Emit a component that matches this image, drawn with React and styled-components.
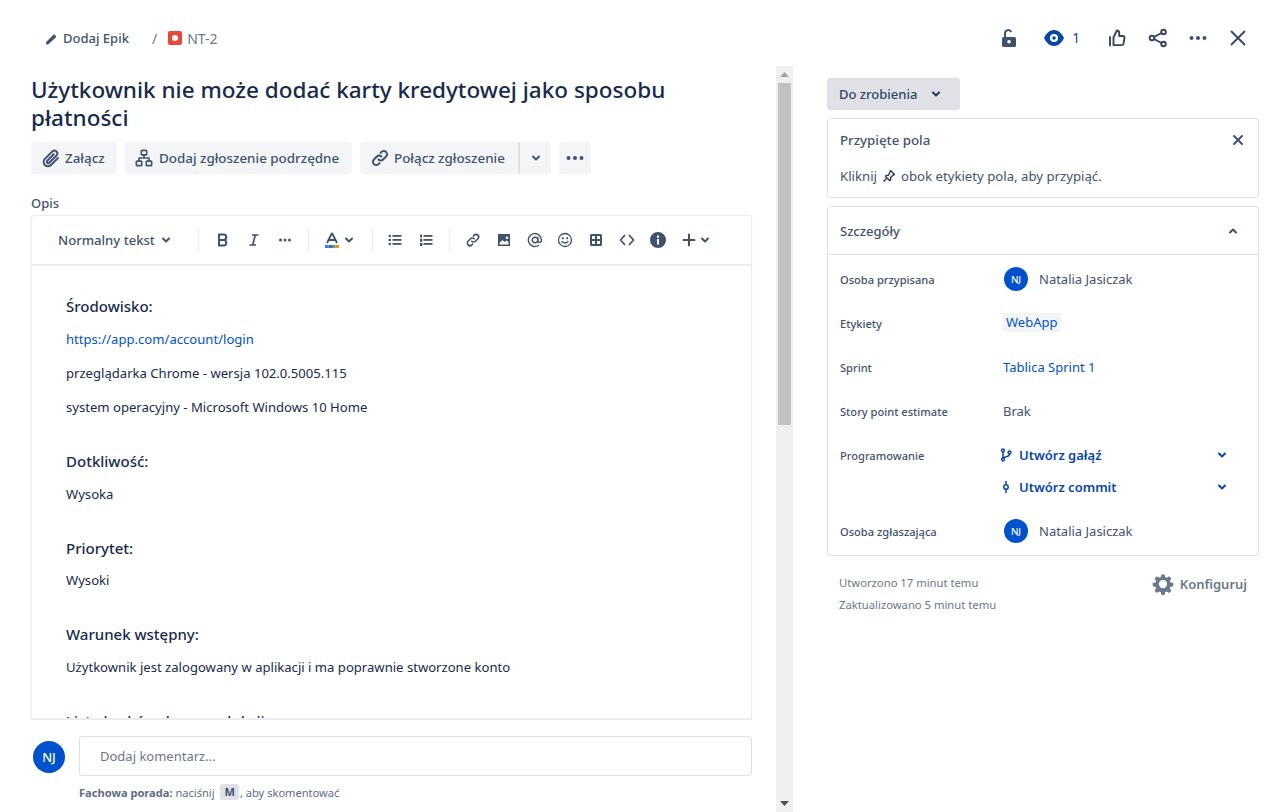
import React from "react";
import styled, { createGlobalStyle } from "styled-components";

const FONT = `"Noto Sans", "Open Sans", sans-serif`;

const Global = createGlobalStyle`
  html, body { margin: 0; padding: 0; height: 100%; background: #fff; overflow: hidden; }
  body { font-family: ${FONT}; color: #172b4d; }
  * { box-sizing: border-box; }
`;

const Page = styled.div`
  width: 1277px;
  height: 812px;
  display: flex;
  flex-direction: column;
  overflow: hidden;
`;

const TopBar = styled.header`
  height: 66px;
  flex: none;
  display: flex;
  align-items: flex-start;
  justify-content: space-between;
  padding: 28px 29px 0 45px;
`;
const Crumbs = styled.nav`
  display: flex;
  align-items: center;
  height: 20px;
  font-size: 14px;
  color: #6b778c;
`;
const EpicLink = styled.span`
  display: flex;
  align-items: center;
  gap: 5px;
  color: #42526e;
  font-weight: 500;
  font-size: 13px;
`;
const Slash = styled.span`
  margin: 0 11px 0 23px;
  color: #6b778c;
`;
const IssueKey = styled.span`
  display: flex;
  align-items: center;
  gap: 5px;
`;
const TopActions = styled.div`
  display: flex;
  align-items: center;
  height: 20px;
`;
const TopAction = styled.span`
  display: flex;
  align-items: center;
  justify-content: center;
  gap: 8px;
  margin-left: ${p => p.$gap}px;
  color: #344563;
  font-size: 13.5px;
`;
const WatchCount = styled.span`
  color: #0747a6;
`;

const Main = styled.main`
  flex: 1;
  min-height: 0;
  display: flex;
`;
const LeftPane = styled.section`
  width: 793px;
  flex: none;
  display: flex;
  min-height: 0;
`;
const LeftColumn = styled.div`
  width: 776px;
  flex: none;
  display: flex;
  flex-direction: column;
  padding: 10px 24px 0 31px;
  min-height: 0;
`;
const Title = styled.h1`
  margin: 0;
  font-size: 22.5px;
  line-height: 28px;
  font-weight: 500;
  color: #172b4d;
  width: 690px;
  height: 56px;
`;
const ButtonRow = styled.div`
  display: flex;
  margin-top: 10px;
  gap: 8px;
  height: 32px;
  flex: none;
`;
const ActionButton = styled.button`
  display: flex;
  align-items: center;
  gap: ${p => p.$gap ?? 4}px;
  height: 32px;
  width: ${p => p.$w}px;
  padding: 0 ${p => p.$pad ?? 12}px;
  justify-content: ${p => p.$center ? "center" : "flex-start"};
  border: 0;
  border-radius: 3px;
  background: #f4f5f7;
  color: #42526e;
  font: 500 13.4px ${FONT};
  white-space: nowrap;
`;
const SplitGroup = styled.div`
  display: flex;
`;
const SplitEdge = styled(ActionButton)`
  border-left: 2px solid #dfe1e6;
  border-radius: 0 3px 3px 0;
`;
const Label = styled.div`
  margin-top: 21px;
  height: 20px;
  font-size: 13px;
  line-height: 16px;
  font-weight: 500;
  color: #42526e;
  flex: none;
`;
const Editor = styled.div`
  height: 505px;
  flex: none;
  border: 1px solid #ebecf0;
  border-bottom-width: 2px;
  border-radius: 3px 3px 0 0;
  overflow: hidden;
  display: flex;
  flex-direction: column;
  box-shadow: 0 0 1px rgba(9,30,66,.12);
`;
const Toolbar = styled.div`
  height: 50px;
  flex: none;
  display: flex;
  align-items: center;
  border-bottom: 2px solid #ebecf0;
  padding-left: 26px;
  color: #42526e;
`;
const StyleSelect = styled.span`
  display: flex;
  align-items: center;
  gap: 3px;
  width: 140px;
  font-size: 13.1px;
  font-weight: 500;
  color: #42526e;
`;
const Divider = styled.span`
  width: 1px;
  height: 24px;
  background: #ebecf0;
  flex: none;
`;
const ToolGroup = styled.span`
  display: flex;
  align-items: center;
  flex: none;
  padding: 0 ${p => p.$r ?? 0}px 0 ${p => p.$l ?? 0}px;
`;
const ToolSlot = styled.span`
  display: flex;
  align-items: center;
  justify-content: center;
  width: ${p => p.$w ?? 31}px;
  flex: none;
  color: #42526e;
`;
const EditorBody = styled.div`
  flex: 1;
  min-height: 0;
  overflow: hidden;
  padding: 30px 34px 0;
`;
const Heading = styled.h3`
  margin: ${p => p.$first ? 0 : 34}px 0 0;
  font-size: 15px;
  line-height: 20px;
  font-weight: 500;
  color: #172b4d;
`;
const Para = styled.p`
  margin: ${p => p.$mt ?? 14}px 0 0;
  font-size: 13.1px;
  line-height: 20px;
  color: #172b4d;
`;
const DocLink = styled.span`
  color: #0052cc;
`;
const CommentRow = styled.div`
  display: flex;
  align-items: flex-start;
  gap: 14px;
  margin-top: 21px;
  padding-left: 2px;
  flex: none;
`;
const Avatar = styled.span`
  width: ${p => p.$size}px;
  height: ${p => p.$size}px;
  margin-left: ${p => p.$indent ?? 0}px;
  border-radius: 50%;
  background: #0052cc;
  color: #fff;
  font-size: ${p => p.$size * 0.4}px;
  font-weight: 500;
  display: flex;
  align-items: center;
  justify-content: center;
  flex: none;
`;
const CommentColumn = styled.div`
  flex: 1;
  margin-top: -5px;
`;
const CommentInput = styled.div`
  height: 40px;
  border: 1px solid #dfe1e6;
  border-radius: 3px;
  display: flex;
  align-items: center;
  padding-left: 20px;
  font-size: 13px;
  color: #6b778c;
`;
const ProTip = styled.div`
  margin-top: 8px;
  height: 16px;
  display: flex;
  align-items: center;
  font-size: 11.1px;
  color: #5e6c84;
  white-space: pre;
`;
const ProStrong = styled.strong`
  font-weight: 700;
`;
const Key = styled.span`
  background: #dfe1e6;
  border-radius: 3px;
  padding: 0 4px;
  margin: 0 1px 0 3px;
  color: #42526e;
  font-weight: 700;
  line-height: 16px;
  font-size: 11.1px;
`;
const Scrollbar = styled.div`
  width: 17px;
  flex: none;
  background: #f0f0f0;
  display: flex;
  flex-direction: column;
  align-items: center;
  justify-content: space-between;
`;
const ScrollArrow = styled.span`
  height: 17px;
  flex: none;
  display: flex;
  align-items: center;
  justify-content: center;
`;
const ScrollTrack = styled.div`
  flex: 1;
  width: 100%;
  display: flex;
  justify-content: center;
`;
const ScrollThumb = styled.div`
  width: 13px;
  height: 342px;
  background: #c1c1c1;
`;

const RightPane = styled.aside`
  width: 432px;
  margin-left: 34px;
  flex: none;
  padding-top: 12px;
  display: flex;
  flex-direction: column;
`;
const StatusButton = styled.button`
  width: 133px;
  height: 32px;
  border: 0;
  border-radius: 3px;
  background: #dfe1e6;
  color: #344563;
  font: 500 13px ${FONT};
  display: flex;
  align-items: center;
  gap: 11px;
  padding: 0 12px;
`;
const Panel = styled.section`
  border: 1px solid #dfe1e6;
  border-radius: 3px;
  margin-top: ${p => p.$mt}px;
`;
const PinnedHead = styled.div`
  display: flex;
  justify-content: space-between;
  align-items: center;
  height: 20px;
  margin: 11px 13px 0 12px;
  font-size: 13.3px;
  font-weight: 500;
  color: #42526e;
`;
const PinnedHint = styled.div`
  display: flex;
  align-items: center;
  gap: 5px;
  margin: 16px 12px 11px;
  height: 20px;
  font-size: 13.2px;
  color: #42526e;
`;
const DetailsHead = styled.div`
  height: 48px;
  display: flex;
  align-items: center;
  justify-content: space-between;
  padding: 0 17px 0 12px;
  border-bottom: 1px solid #dfe1e6;
  font-size: 13px;
  font-weight: 500;
  color: #42526e;
`;
const Fields = styled.div`
  padding: 2px 0 2px;
`;
const FieldRow = styled.div`
  display: grid;
  grid-template-columns: 163px 1fr;
  height: 44px;
  padding-left: 12px;
  align-items: center;
`;
const FieldLabel = styled.span`
  font-size: 11.1px;
  font-weight: 500;
  color: #42526e;
`;
const FieldValue = styled.span`
  display: flex;
  align-items: center;
  gap: 11px;
  font-size: 13px;
  color: #42526e;
`;
const Tag = styled.span`
  background: #f4f5f7;
  color: #0052cc;
  border-radius: 3px;
  padding: 0 4px;
  margin: -2px 0 0 -1px;
  line-height: 19px;
`;
const BlueText = styled.span`
  color: #0052cc;
`;
const DevBlock = styled.div`
  display: grid;
  grid-template-columns: 159px 1fr;
  padding-left: 12px;
  height: 76px;
`;
const DevLabel = styled(FieldLabel)`
  padding-top: 15px;
`;
const DevRows = styled.div`
  display: flex;
  flex-direction: column;
  padding-top: 6px;
`;
const DevRow = styled.div`
  height: 32px;
  display: flex;
  align-items: center;
  padding-right: 28px;
  color: #0747a6;
  font-size: 13px;
  font-weight: 600;
`;
const DevName = styled.span`
  flex: 1;
  margin-left: 6px;
  color: #0747a6;
`;
const MetaRow = styled.div`
  display: flex;
  justify-content: space-between;
  align-items: flex-start;
  padding: 16px 12px 0 12px;
`;
const MetaDates = styled.div`
  font-size: 11.25px;
  line-height: 22px;
  color: #6b778c;
`;
const Configure = styled.span`
  display: flex;
  align-items: center;
  gap: 6px;
  height: 24px;
  font-size: 13px;
  font-weight: 600;
  color: #6b778c;
`;

const Chevron = ({ up, size = 16, color = "currentColor", w = 2 }) => (
  <svg width={size} height={size} viewBox="0 0 16 16" fill="none" stroke={color} strokeWidth={w} strokeLinecap="round" strokeLinejoin="round" style={{ flex: "none" }}>
    <path d={up ? "M5 9.5 8 6.5l3 3" : "M5 6.5 8 9.5l3-3"} />
  </svg>
);
const Ic = ({ s = 20, children, fill = "none", sw = 2, vb = 20 }) => (
  <svg width={s} height={s} viewBox={`0 0 ${vb} ${vb}`} fill={fill} stroke={fill === "none" ? "currentColor" : "none"} strokeWidth={sw} strokeLinecap="round" strokeLinejoin="round" style={{ flex: "none" }}>
    {children}
  </svg>
);
const LinkGlyph = ({ s = 20, sw = 2 }) => (
  <Ic s={s} sw={sw}>
    <path d="M8.5 11.5a3.2 3.2 0 0 0 4.6 0l3-3a3.2 3.2 0 0 0-4.6-4.6l-1 1" />
    <path d="M11.5 8.5a3.2 3.2 0 0 0-4.6 0l-3 3a3.2 3.2 0 0 0 4.6 4.6l1-1" />
  </Ic>
);

const Field = ({ label, children }) => (
  <FieldRow>
    <FieldLabel>{label}</FieldLabel>
    <FieldValue>{children}</FieldValue>
  </FieldRow>
);

export default function App() {
  return (
    <Page>
      <Global />
      <TopBar>
        <Crumbs>
          <EpicLink>
            <svg width="13" height="13" viewBox="0 0 13 13" fill="#42526e"><path d="M1 10.2 8.4 2.8a1 1 0 0 1 1.4 0l1.1 1.1a1 1 0 0 1 0 1.4L3.5 12.2 1 12.5z" /></svg>
            Dodaj Epik
          </EpicLink>
          <Slash>/</Slash>
          <IssueKey>
            <svg width="14" height="14" viewBox="0 0 14 14"><rect width="14" height="14" rx="2" fill="#e5493a" /><circle cx="7" cy="7" r="3" fill="#fff" /></svg>
            NT-2
          </IssueKey>
        </Crumbs>
        <TopActions>
          <TopAction>
            <svg width="16" height="20" viewBox="0 0 16 20" fill="#42526e"><path d="M3 9V5.2a4.2 4.2 0 0 1 8.1-1.5l-1.9.7A2.2 2.2 0 0 0 5 5.2V9h8.500A1.500 1.500 0 0 1 15 10.500v7a1.500 1.500 0 0 1-1.500 1.500h-11A1.500 1.500 0 0 1 1 17.500v-7A1.500 1.500 0 0 1 2.500 9zm5 3a1.800 1.800 0 1 0 0 3.600A1.800 1.800 0 0 0 8 12z" fillRule="evenodd" /></svg>
          </TopAction>
          <TopAction $gap={27}>
            <svg width="20" height="18" viewBox="0 0 20 18" fill="#0747a6"><path fillRule="evenodd" d="M10 1c5 0 8.500 4.500 10 8-1.500 3.500-5 8-10 8S1.500 12.500 0 9c1.500-3.500 5-8 10-8zm0 4a4 4 0 1 0 0 8 4 4 0 0 0 0-8zm0 2.200a1.800 1.800 0 1 1 0 3.600 1.800 1.800 0 0 1 0-3.600z" /></svg>
            <WatchCount>1</WatchCount>
          </TopAction>
          <TopAction $gap={27}>
            <Ic s={20} sw={1.9}>
              <path d="M3 9v8.500M6.500 9.500 9.800 2.500c1.500 0 2.400 1 2.400 2.500v3h3.800c1 0 1.700.9 1.500 1.900l-1 5.700c-.2.900-.9 1.500-1.800 1.500H6.500z" />
            </Ic>
          </TopAction>
          <TopAction $gap={21}>
            <Ic s={20} sw={1.9}>
              <circle cx="4" cy="10" r="2.3" />
              <circle cx="15.5" cy="4" r="2.3" />
              <circle cx="15.5" cy="16" r="2.3" />
              <path d="M6 9 13.500 5M6 11l7.500 4" />
            </Ic>
          </TopAction>
          <TopAction $gap={20}>
            <svg width="20" height="20" viewBox="0 0 20 20" fill="#42526e"><circle cx="3.500" cy="10" r="2" /><circle cx="10" cy="10" r="2" /><circle cx="16.500" cy="10" r="2" /></svg>
          </TopAction>
          <TopAction $gap={20}>
            <Ic s={20} sw={1.8}><path d="M3.500 3.500l13 13M16.500 3.500l-13 13" /></Ic>
          </TopAction>
        </TopActions>
      </TopBar>
      <Main>
        <LeftPane>
          <LeftColumn>
            <Title>Użytkownik nie może dodać karty kredytowej jako sposobu płatności</Title>
            <ButtonRow>
              <ActionButton $w={86} $pad={10}>
                <Ic s={20} sw={2}><path d="M17 10l-7 7a4.300 4.300 0 0 1-6.100-6.100l7.500-7.500a2.900 2.900 0 0 1 4.100 4.100l-7.300 7.300a1.400 1.400 0 0 1-2-2l6.500-6.500" /></Ic>
                Załącz
              </ActionButton>
              <ActionButton $w={227} $pad={10} $gap={6}>
                <Ic s={18} sw={1.8}><rect x="7" y="1.500" width="6" height="5" rx=".8" /><rect x="1.500" y="13.500" width="6" height="5" rx=".8" /><rect x="12.500" y="13.500" width="6" height="5" rx=".8" /><path d="M10 6.500V10M4.500 13.500V10h11v3.500" /></Ic>
                Dodaj zgłoszenie podrzędne
              </ActionButton>
              <SplitGroup>
                <ActionButton $w={158} $pad={10}>
                  <LinkGlyph s={20} />
                  Połącz zgłoszenie
                </ActionButton>
                <SplitEdge $w={33} $pad={0} $center><Chevron /></SplitEdge>
              </SplitGroup>
              <ActionButton $w={32} $pad={0} $center>
                <svg width="20" height="20" viewBox="0 0 20 20" fill="#42526e"><circle cx="3.500" cy="10" r="2" /><circle cx="10" cy="10" r="2" /><circle cx="16.500" cy="10" r="2" /></svg>
              </ActionButton>
            </ButtonRow>
            <Label>Opis</Label>
            <Editor>
              <Toolbar>
                <StyleSelect>Normalny tekst<Chevron /></StyleSelect>
                <Divider />
                <ToolGroup $l={8} $r={8}>
                  <ToolSlot>
                    <svg width="14" height="14" viewBox="0 0 14 14" fill="none" stroke="#42526e" strokeWidth="2"><path d="M3 1.500h4.500a2.700 2.700 0 0 1 0 5.500H3zM3 7h5a2.800 2.800 0 0 1 0 5.500H3z" /></svg>
                  </ToolSlot>
                  <ToolSlot>
                    <svg width="14" height="14" viewBox="0 0 14 14" fill="none" stroke="#42526e" strokeWidth="1.700"><path d="M5 2h6.500M2.500 12H9M8.300 2 5.700 12" /></svg>
                  </ToolSlot>
                  <ToolSlot>
                    <svg width="16" height="16" viewBox="0 0 16 16" fill="#42526e"><circle cx="3.500" cy="8" r="1.500" /><circle cx="8" cy="8" r="1.500" /><circle cx="12.500" cy="8" r="1.500" /></svg>
                  </ToolSlot>
                </ToolGroup>
                <Divider />
                <ToolGroup $l={15} $r={15}>
                  <ToolSlot $w={16}>
                    <svg width="16" height="18" viewBox="0 0 16 18"><path d="M8 2 3 12M8 2l5 10M5 9h6" stroke="#42526e" strokeWidth="1.800" fill="none" /><rect x="1" y="14" width="3.500" height="3" fill="#2684ff" /><rect x="4.500" y="14" width="3.500" height="3" fill="#6554c0" /><rect x="8" y="14" width="3.500" height="3" fill="#36b37e" /><rect x="11.500" y="14" width="3.500" height="3" fill="#ff8b00" /></svg>
                  </ToolSlot>
                  <ToolSlot $w={17}><Chevron /></ToolSlot>
                </ToolGroup>
                <Divider />
                <ToolGroup $l={6} $r={8}>
                  <ToolSlot>
                    <svg width="14" height="14" viewBox="0 0 14 14" fill="#42526e"><circle cx="1.800" cy="3" r="1.300" /><circle cx="1.800" cy="7" r="1.300" /><circle cx="1.800" cy="11" r="1.300" /><rect x="4.500" y="2" width="9" height="1.800" /><rect x="4.500" y="6" width="9" height="1.800" /><rect x="4.500" y="10" width="9" height="1.800" /></svg>
                  </ToolSlot>
                  <ToolSlot>
                    <svg width="14" height="14" viewBox="0 0 14 14" fill="#42526e"><rect x="1" y="1.500" width="2" height="3" /><rect x="1" y="5.800" width="2.400" height="3" /><rect x="1" y="10" width="2.400" height="3" /><rect x="4.500" y="2" width="9" height="1.800" /><rect x="4.500" y="6" width="9" height="1.800" /><rect x="4.500" y="10" width="9" height="1.800" /></svg>
                  </ToolSlot>
                </ToolGroup>
                <Divider />
                <ToolGroup $l={7}>
                  <ToolSlot><LinkGlyph s={16} sw={2} /></ToolSlot>
                  <ToolSlot>
                    <svg width="14" height="14" viewBox="0 0 14 14"><path fillRule="evenodd" fill="#42526e" d="M1 1h12v12H1zm9 2.500a1.300 1.300 0 1 0 0 2.600 1.300 1.300 0 0 0 0-2.600zM2.500 11.500h9V9L9.500 7.500l-2 1.500-2-2-3 3z" /></svg>
                  </ToolSlot>
                  <ToolSlot>
                    <svg width="16" height="16" viewBox="0 0 16 16" fill="none" stroke="#42526e" strokeWidth="1.400" strokeLinecap="round"><circle cx="8" cy="8" r="2.800" /><path d="M10.800 5.200v3.500a1.800 1.800 0 0 0 3.600 0V8a6.500 6.500 0 1 0-3 5.500" /></svg>
                  </ToolSlot>
                  <ToolSlot $w={30}>
                    <svg width="16" height="16" viewBox="0 0 16 16" fill="none" stroke="#42526e" strokeWidth="1.300" strokeLinecap="round"><circle cx="8" cy="8" r="6.500" /><path d="M5 9.500c1.500 2 4.500 2 6 0" /><path d="M5.800 6v.4M10.200 6v.4" strokeWidth="1.800" /></svg>
                  </ToolSlot>
                  <ToolSlot>
                    <svg width="14" height="14" viewBox="0 0 14 14"><path fillRule="evenodd" fill="#42526e" d="M2.500 1h9A1.500 1.500 0 0 1 13 2.500v9a1.500 1.500 0 0 1-1.500 1.500h-9A1.500 1.500 0 0 1 1 11.500v-9A1.500 1.500 0 0 1 2.500 1zM3 3v3h3V3zm5 0v3h3V3zM3 8v3h3V8zm5 0v3h3V8z" /></svg>
                  </ToolSlot>
                  <ToolSlot>
                    <svg width="16" height="16" viewBox="0 0 16 16" fill="none" stroke="#42526e" strokeWidth="1.800" strokeLinecap="round" strokeLinejoin="round"><path d="M5.500 3.500 1.500 8l4 4.500M10.500 3.500l4 4.500-4 4.500" /></svg>
                  </ToolSlot>
                  <ToolSlot>
                    <svg width="16" height="16" viewBox="0 0 16 16"><path fillRule="evenodd" fill="#42526e" d="M8 0a8 8 0 1 1 0 16A8 8 0 0 1 8 0zM7 7v5.500h2V7zm1-3.500a1.200 1.200 0 1 0 0 2.400 1.200 1.200 0 0 0 0-2.400z" /></svg>
                  </ToolSlot>
                  <ToolSlot>
                    <svg width="14" height="14" viewBox="0 0 14 14" stroke="#42526e" strokeWidth="2" strokeLinecap="round"><path d="M7 1.500v11M1.500 7h11" /></svg>
                  </ToolSlot>
                  <ToolSlot $w={1}><Chevron /></ToolSlot>
                </ToolGroup>
              </Toolbar>
              <EditorBody>
                <Heading $first>Środowisko:</Heading>
                <Para $mt={13}><DocLink>https://app.com/account/login</DocLink></Para>
                <Para>przeglądarka Chrome - wersja 102.0.5005.115</Para>
                <Para>system operacyjny - Microsoft Windows 10 Home</Para>
                <Heading>Dotkliwość:</Heading>
                <Para $mt={13}>Wysoka</Para>
                <Heading>Priorytet:</Heading>
                <Para $mt={12}>Wysoki</Para>
                <Heading>Warunek wstępny:</Heading>
                <Para $mt={13}>Użytkownik jest zalogowany w aplikacji i ma poprawnie stworzone konto</Para>
                <Heading>Lista kroków do reprodukcji:</Heading>
              </EditorBody>
            </Editor>
            <CommentRow>
              <Avatar $size={32}>NJ</Avatar>
              <CommentColumn>
                <CommentInput>Dodaj komentarz...</CommentInput>
                <ProTip><ProStrong>Fachowa porada:</ProStrong> naciśnij <Key>M</Key>, aby skomentować</ProTip>
              </CommentColumn>
            </CommentRow>
          </LeftColumn>
          <Scrollbar>
            <ScrollArrow><svg width="9" height="5" viewBox="0 0 9 5" fill="#a3a3a3"><path d="M4.500 0 9 5H0z" /></svg></ScrollArrow>
            <ScrollTrack><ScrollThumb /></ScrollTrack>
            <ScrollArrow><svg width="9" height="5" viewBox="0 0 9 5" fill="#505050"><path d="M0 0h9L4.500 5z" /></svg></ScrollArrow>
          </Scrollbar>
        </LeftPane>
        <RightPane>
          <StatusButton>Do zrobienia <Chevron color="#253858" /></StatusButton>
          <Panel $mt={8}>
            <PinnedHead>
              Przypięte pola
              <svg width="14" height="14" viewBox="0 0 14 14" stroke="#42526e" strokeWidth="2" strokeLinecap="round"><path d="M3 3l8 8M11 3l-8 8" /></svg>
            </PinnedHead>
            <PinnedHint>
              Kliknij
              <svg width="14" height="14" viewBox="0 0 14 14" fill="none" stroke="#253858" strokeWidth="1.400" strokeLinejoin="round"><path d="M8.500 1.500l4 4-1.300.5-2.500 2.500-.2 2.500-1 .5-4-4 .5-1 2.500-.2L8 3z" /><path d="M4.500 9.500 1.500 12.500" /></svg>
              obok etykiety pola, aby przypiąć.
            </PinnedHint>
          </Panel>
          <Panel $mt={8}>
            <DetailsHead>Szczegóły<Chevron up /></DetailsHead>
            <Fields>
              <Field label="Osoba przypisana"><Avatar $size={24} $indent={1}>NJ</Avatar>Natalia Jasiczak</Field>
              <Field label="Etykiety"><Tag>WebApp</Tag></Field>
              <Field label="Sprint"><BlueText>Tablica Sprint 1</BlueText></Field>
              <Field label="Story point estimate">Brak</Field>
              <DevBlock>
                <DevLabel>Programowanie</DevLabel>
                <DevRows>
                  <DevRow>
                    <svg width="14" height="14" viewBox="0 0 14 14" fill="none" stroke="#0747a6" strokeWidth="1.500"><circle cx="4" cy="2.500" r="1.400" /><circle cx="4" cy="11.500" r="1.400" /><circle cx="10.500" cy="4.500" r="1.400" /><path d="M4 4v6M10.500 6c0 2-3 3-6 3.500" /></svg>
                    <DevName>Utwórz gałąź</DevName>
                    <Chevron color="#0747a6" />
                  </DevRow>
                  <DevRow>
                    <svg width="14" height="14" viewBox="0 0 14 14" fill="none" stroke="#0747a6" strokeWidth="1.500"><circle cx="7" cy="7" r="2.200" /><path d="M7 1v3.500M7 9.500V13" /></svg>
                    <DevName>Utwórz commit</DevName>
                    <Chevron color="#0747a6" />
                  </DevRow>
                </DevRows>
              </DevBlock>
              <Field label="Osoba zgłaszająca"><Avatar $size={24} $indent={1}>NJ</Avatar>Natalia Jasiczak</Field>
            </Fields>
          </Panel>
          <MetaRow>
            <MetaDates>Utworzono 17 minut temu<br />Zaktualizowano 5 minut temu</MetaDates>
            <Configure>
              <svg width="22" height="22" viewBox="0 0 24 24" fill="#6b778c"><path fillRule="evenodd" d="M10.200 1.500h3.600l.5 2.900 2 .8 2.400-1.700 2.500 2.500-1.700 2.400.8 2 2.900.5v3.600l-2.900.5-.8 2 1.700 2.400-2.500 2.500-2.400-1.700-2 .8-.5 2.900h-3.600l-.5-2.900-2-.8-2.400 1.700-2.500-2.500 1.700-2.400-.8-2-2.900-.5v-3.600l2.900-.5.8-2-1.700-2.400 2.500-2.500 2.400 1.700 2-.8zM12 7.500a4.500 4.500 0 1 0 0 9 4.500 4.500 0 0 0 0-9z" /></svg>
              Konfiguruj
            </Configure>
          </MetaRow>
        </RightPane>
      </Main>
    </Page>
  );
}
